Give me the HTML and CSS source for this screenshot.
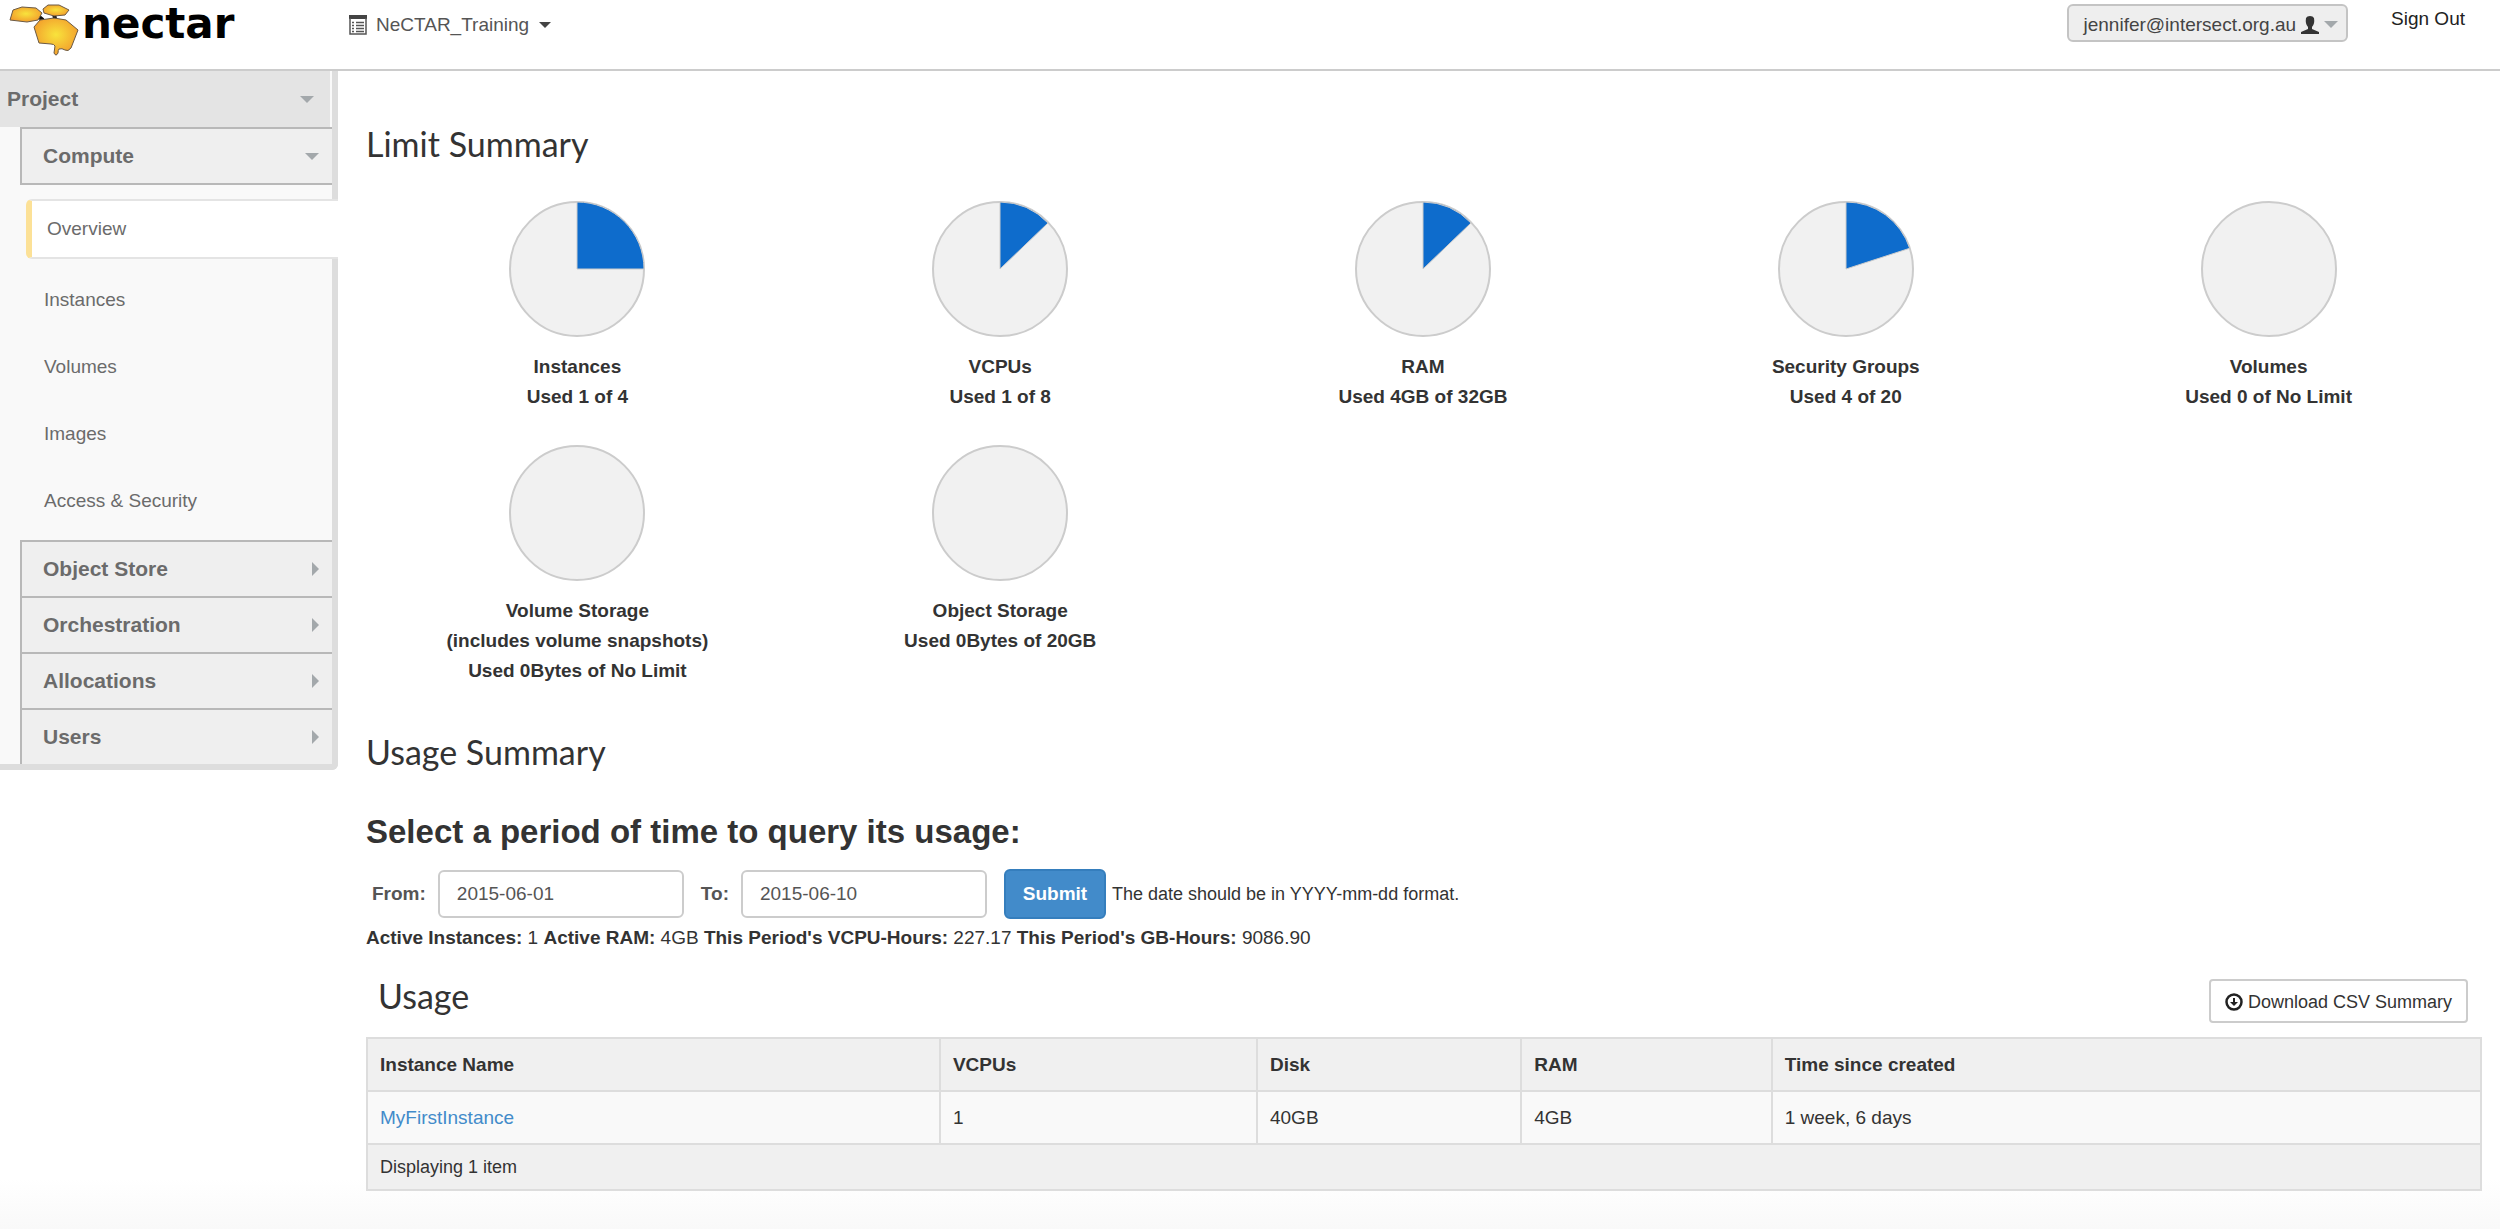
FILE: index.html
```html
<!DOCTYPE html>
<html lang="en">
<head>
<meta charset="utf-8">
<title>Instance Overview</title>
<link rel="stylesheet" href="styles.css">
</head>
<body>
<header class="topbar">
  <a class="logo" href="#">
    <svg viewBox="0 0 82 60" width="82" height="60" aria-hidden="true">
      <defs>
        <radialGradient id="honey" cx="50%" cy="45%" r="60%">
          <stop offset="0" stop-color="#f8e33c"/>
          <stop offset="1" stop-color="#f2992b"/>
        </radialGradient>
      </defs>
      <path d="M38 16l5 4M54 13l1 6" stroke="#111" stroke-width="4"/>
      <g fill="url(#honey)" stroke="#6b5a45" stroke-width="1" stroke-linejoin="round">
        <path d="M10 20L13 10 22 7 36 8 42 13 38 20 27 22z"/>
        <path d="M43 9L48 5 59 5 69 10 65 15 54 16 44 13z"/>
        <path d="M34 27L40 20 54 18 66 20 78 30 71 48Q68 52 65 50T59 49Q58 50 58 53 56 57 54 53L55 46Q54 44 51 44L39 43z"/>
      </g>
    </svg>
    <span class="wordmark">nectar</span>
  </a>
  <button class="project-switch" type="button">
    <svg class="list-icon" viewBox="0 0 18 20" width="18" height="20" aria-hidden="true">
      <path d="M0 0h18v4H0z" fill="#444"/>
      <path d="M1 3v16h16V3M3 7.500h2M7 7.500h8M3 10.500h2M7 10.500h8M3 13.500h2M7 13.500h8M3 16.500h2M7 16.500h8" fill="none" stroke="#555" stroke-width="1.500"/>
    </svg>
    <span>NeCTAR_Training</span>
    <span class="caret dark"></span>
  </button>
  <div class="account">
    <button class="user-menu" type="button">
      <span>jennifer@intersect.org.au</span>
      <svg viewBox="0 0 18 18" width="18" height="18" aria-hidden="true">
        <path d="M5 2q1-2 4-2t4 2q1 6-2 9v2l7 3v2H0v-2l7-3v-2q-3-3-2-9z" fill="#333"/>
      </svg>
      <span class="caret wide"></span>
    </button>
    <a class="sign-out" href="#">Sign Out</a>
  </div>
</header>
<div class="layout">
  <nav class="sidebar" aria-label="Main">
    <button class="dashboard" type="button">Project<span class="caret wide"></span></button>
    <div class="panels">
      <button class="panel-group open" type="button">Compute<span class="caret wide"></span></button>
      <ul class="panel-list">
        <li><a class="current" href="#">Overview</a></li>
        <li><a href="#">Instances</a></li>
        <li><a href="#">Volumes</a></li>
        <li><a href="#">Images</a></li>
        <li><a href="#">Access &amp; Security</a></li>
      </ul>
      <button class="panel-group" type="button">Object Store<span class="arrow"></span></button>
      <button class="panel-group" type="button">Orchestration<span class="arrow"></span></button>
      <button class="panel-group" type="button">Allocations<span class="arrow"></span></button>
      <button class="panel-group" type="button">Users<span class="arrow"></span></button>
    </div>
  </nav>
  <main class="content">
    <h1 class="section-title">Limit Summary</h1>
    <div class="quotas">
      <div class="quota">
        <svg class="pie" viewBox="0 0 136 136"><circle cx="68" cy="68" r="67"/><path d="M68 68V1A67 67 0 0 1 135 68z"/></svg>
        <strong>Instances<br>Used 1 of 4</strong>
      </div>
      <div class="quota">
        <svg class="pie" viewBox="0 0 136 136"><circle cx="68" cy="68" r="67"/><path d="M68 68V1A67 67 0 0 1 116 22z"/></svg>
        <strong>VCPUs<br>Used 1 of 8</strong>
      </div>
      <div class="quota">
        <svg class="pie" viewBox="0 0 136 136"><circle cx="68" cy="68" r="67"/><path d="M68 68V1A67 67 0 0 1 116 22z"/></svg>
        <strong>RAM<br>Used 4GB of 32GB</strong>
      </div>
      <div class="quota">
        <svg class="pie" viewBox="0 0 136 136"><circle cx="68" cy="68" r="67"/><path d="M68 68V1A67 67 0 0 1 131.700 47.300z"/></svg>
        <strong>Security Groups<br>Used 4 of 20</strong>
      </div>
      <div class="quota">
        <svg class="pie" viewBox="0 0 136 136"><circle cx="68" cy="68" r="67"/></svg>
        <strong>Volumes<br>Used 0 of No Limit</strong>
      </div>
      <div class="quota">
        <svg class="pie" viewBox="0 0 136 136"><circle cx="68" cy="68" r="67"/></svg>
        <strong>Volume Storage<br>(includes volume snapshots)<br>Used 0Bytes of No Limit</strong>
      </div>
      <div class="quota">
        <svg class="pie" viewBox="0 0 136 136"><circle cx="68" cy="68" r="67"/></svg>
        <strong>Object Storage<br>Used 0Bytes of 20GB</strong>
      </div>
    </div>
    <h2 class="section-title">Usage Summary</h2>
    <form class="period">
      <h3 class="period-title">Select a period of time to query its usage:</h3>
      <div class="period-fields">
        <label for="from">From:</label>
        <input id="from" type="text" value="2015-06-01">
        <label for="to">To:</label>
        <input id="to" type="text" value="2015-06-10">
        <button class="submit" type="submit">Submit</button>
        <small>The date should be in YYYY-mm-dd format.</small>
      </div>
    </form>
    <p class="totals"><strong>Active Instances:</strong> 1 <strong>Active RAM:</strong> 4GB <strong>This Period's VCPU-Hours:</strong> 227.17 <strong>This Period's GB-Hours:</strong> 9086.90</p>
    <div class="table-head">
      <h3 class="section-title">Usage</h3>
      <button class="download" type="button">
        <svg viewBox="0 0 18 18" width="18" height="18" aria-hidden="true">
          <circle cx="9" cy="9" r="7.500" fill="none" stroke="#222" stroke-width="2.500"/>
          <path d="M8 5h2v4h3l-4 4-4-4h3z" fill="#222"/>
        </svg>
        <span>Download CSV Summary</span>
      </button>
    </div>
    <table class="usage">
      <colgroup><col class="c-name"><col class="c-cpu"><col class="c-disk"><col class="c-ram"><col></colgroup>
      <thead><tr><th>Instance Name</th><th>VCPUs</th><th>Disk</th><th>RAM</th><th>Time since created</th></tr></thead>
      <tbody><tr><td><a href="#">MyFirstInstance</a></td><td>1</td><td>40GB</td><td>4GB</td><td>1 week, 6 days</td></tr></tbody>
      <tfoot><tr><td colspan="5">Displaying 1 item</td></tr></tfoot>
    </table>
  </main>
</div>
</body>
</html>
```
FILE: styles.css
```css
* { box-sizing: border-box; }
body {
  margin: 0;
  min-height: 100vh;
  font: 19px/30px "Liberation Sans", Arial, sans-serif;
  color: #333;
  background: linear-gradient(to top, #f9f9f9, #fff 50px) #fff;
}
button, input { font: inherit; color: inherit; }
button { background: none; border: 0; padding: 0; }
a { color: #428bca; text-decoration: none; }
h1, h2, h3, p, ul { margin: 0; padding: 0; }
svg { flex: none; }

.topbar {
  display: flex;
  align-items: flex-start;
  height: 71px;
  border-bottom: 2px solid #ccc;
}
.logo { display: flex; flex: 0 0 349px; height: 60px; }
.wordmark { font: bold 42px/48px "DejaVu Sans", sans-serif; color: #000; }
.project-switch { display: flex; align-items: center; padding-top: 10px; color: #555; }
.list-icon { margin-right: 9px; }
.caret {
  border: solid transparent;
  border-width: 6px 6px 0;
  border-top-color: #a3a8ab;
}
.caret.dark { margin-left: 10px; border-top-color: #444; }
.caret.wide { border-width: 7px 7px 0; }
.account { margin-left: auto; display: flex; align-items: flex-start; gap: 43px; padding: 4px 35px 0 0; }
.user-menu {
  display: flex;
  align-items: center;
  gap: 5px;
  height: 38px;
  padding: 3px 8px 0 15px;
  background: #eee;
  border: 2px solid #c4c4c4;
  border-radius: 6px;
  color: #444;
}
.sign-out { color: #222; }

.layout { display: flex; align-items: flex-start; }
.sidebar {
  flex: 0 0 338px;
  border: solid #ddd;
  border-width: 0 6px 6px 0;
  border-radius: 0 0 6px 0;
  background: #f9f9f9;
  color: #6b6b6b;
}
.dashboard, .panel-group {
  display: flex;
  align-items: center;
  justify-content: space-between;
  width: 100%;
  font-size: 21px;
  font-weight: bold;
}
.dashboard {
  height: 56px;
  padding: 0 16px 0 7px;
  background: #e4e4e4;
  border-right: 2px solid #f9f9f9;
}
.panels { padding-left: 20px; }
.panel-group {
  height: 56px;
  padding: 0 13px 0 21px;
  border: solid #b8b8b8;
  border-width: 2px 0 0 2px;
  background: #efefef;
}
.panel-group.open { height: 58px; border-bottom-width: 2px; }
.arrow {
  border: solid transparent;
  border-width: 7px 0 7px 7px;
  border-left-color: #a3a8ab;
}
.panel-list { list-style: none; padding: 14px 0 2px; }
.panel-list a {
  display: flex;
  align-items: center;
  height: 60px;
  padding-left: 24px;
  margin-bottom: 7px;
  color: #6b6b6b;
}
.panel-list .current {
  margin: 0 -6px 11px 6px;
  padding-left: 15px;
  background: #fff;
  border: solid #e4e4e4;
  border-width: 2px 0;
  border-left: 6px solid #fce197;
  border-radius: 6px 0 0 6px;
}

.content { flex: 1; min-width: 0; padding: 49px 18px 0 28px; }
.section-title { font: 34px/48px Lato, "Open Sans", sans-serif; }
.quotas { display: grid; grid-template-columns: repeat(5, 1fr); row-gap: 33px; padding: 33px 2px 42px 0; }
.quota { display: flex; flex-direction: column; align-items: center; text-align: center; }
.pie { width: 136px; height: 136px; margin-bottom: 15px; }
.pie circle { fill: #f1f1f1; stroke: #ccc; stroke-width: 2; }
.pie path { fill: #0e6ccc; stroke: #ccc; stroke-width: 1; }
.period-title { margin-top: 32px; font-size: 33px; line-height: 48px; }
.period-fields { display: flex; align-items: center; padding: 12px 0 4px 6px; height: 67px; }
.period-fields label { font-weight: bold; color: #555; }
.period-fields input {
  width: 246px;
  height: 48px;
  margin: 0 17px 0 12px;
  padding: 0 17px;
  border: 2px solid #ccc;
  border-radius: 6px;
  color: #555;
  background: #fff;
}
.submit {
  width: 102px;
  height: 50px;
  margin-right: 6px;
  border: 2px solid #357ebd;
  border-radius: 6px;
  background: #428bca;
  color: #fff;
  font-weight: bold;
}
.period-fields small { font-size: 18px; }
.table-head { display: flex; justify-content: space-between; align-items: flex-start; padding: 19px 14px 0 12px; height: 84px; }
.download {
  display: flex;
  align-items: center;
  gap: 5px;
  height: 44px;
  margin-top: 7px;
  padding: 2px 14px 0;
  border: 2px solid #ccc;
  border-radius: 4px;
  background: #fff;
  font-size: 18px;
}
.usage { width: 100%; border-collapse: collapse; table-layout: fixed; border: 2px solid #ddd; }
.usage th, .usage td { height: 53px; padding: 0 12px; text-align: left; border: 2px solid #ddd; }
.usage th, .usage tfoot td { background: #f0f0f0; }
.usage tbody td { background: #f9f9f9; }
.usage tfoot td { height: 46px; font-size: 18px; }
.c-name { width: 27.100%; }
.c-cpu { width: 15%; }
.c-disk { width: 12.500%; }
.c-ram { width: 11.850%; }
```
